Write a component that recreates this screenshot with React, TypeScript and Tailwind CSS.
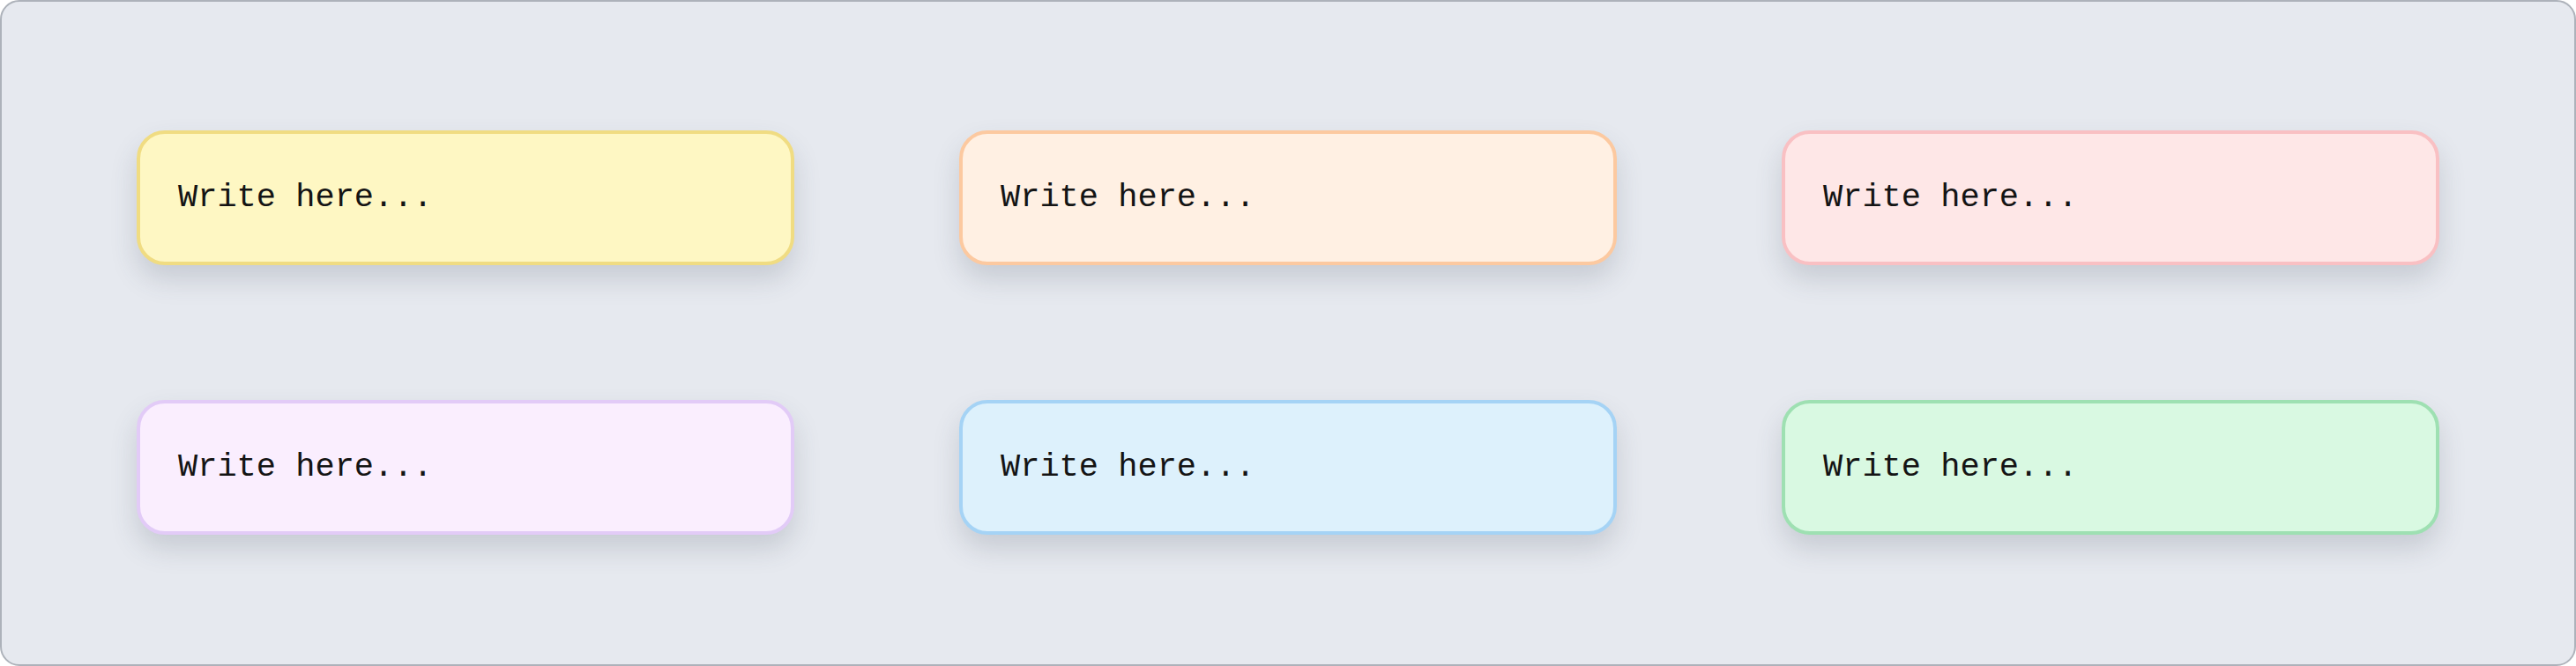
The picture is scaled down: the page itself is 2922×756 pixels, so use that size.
import React from 'react';

const notes = [
  { bg: 'bg-[#fef7c3]', border: 'border-[#f0dc82]' },
  { bg: 'bg-[#fff0e3]', border: 'border-[#fcc9a0]' },
  { bg: 'bg-[#fee7e7]', border: 'border-[#f9c0c3]' },
  { bg: 'bg-[#faeefe]', border: 'border-[#e2cbf7]' },
  { bg: 'bg-[#ddf1fc]', border: 'border-[#a5d3f5]' },
  { bg: 'bg-[#d9f9e2]', border: 'border-[#9ee0b2]' },
];

const App: React.FC = () => {
  return (
    <div className="w-full h-[756px] bg-white">
      <div className="h-full bg-[#e6e9ef] border-2 border-[#adb2ba] rounded-[22px] px-[153px] pt-[146px]">
        <div className="grid grid-cols-3 gap-x-[187px] gap-y-[153px]">
          {notes.map((note, index) => (
            <div
              key={index}
              className={`h-[153px] rounded-[32px] border-4 ${note.border} ${note.bg} flex items-center pl-[43px] shadow-[0_16px_30px_rgba(60,70,90,0.18)]`}
            >
              <span className="text-[37px] leading-none text-[#141414] font-['Liberation_Mono',monospace]">
                Write here...
              </span>
            </div>
          ))}
        </div>
      </div>
    </div>
  );
};

export default App;
